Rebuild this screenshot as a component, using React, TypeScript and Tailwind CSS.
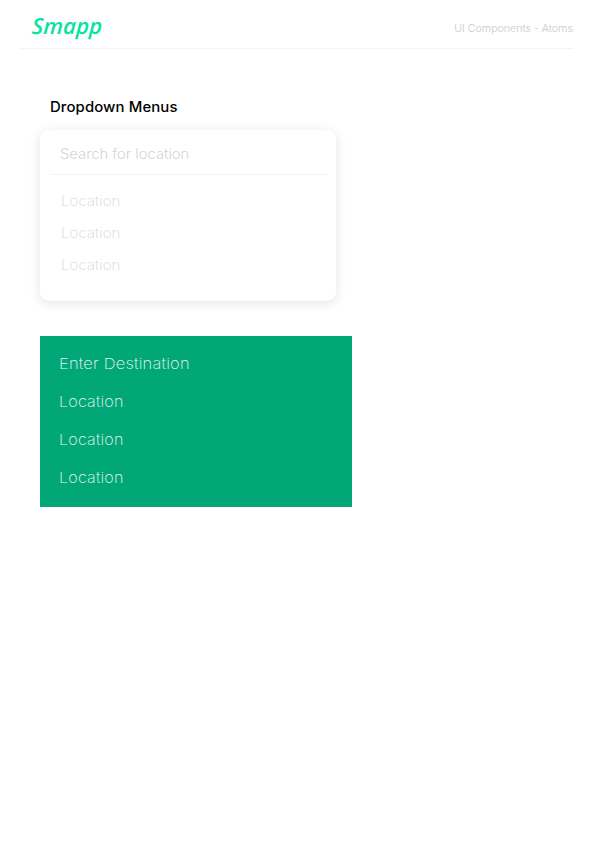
const locations = ['Location', 'Location', 'Location'];

export default function App() {
  return (
    <div className="min-h-[842px] w-[595px] overflow-hidden bg-white font-['Inter','Liberation_Sans',sans-serif]">
      <header className="ml-5 flex h-[49px] w-[553px] items-start justify-between border-b border-[#f3f3f3] pl-3">
        <span className="mt-[9px] origin-left scale-x-[1.01] -skew-x-3 font-['Open_Sans','Lato',sans-serif] text-[22px] leading-8 font-semibold whitespace-nowrap text-[#08e4a0] italic">
          Smapp
        </span>
        <span className="mt-[20px] origin-right scale-x-[1.07] text-[10px] leading-4 font-light tracking-[-0.04px] whitespace-nowrap text-[#c8c8c8]">
          UI Components - Atoms
        </span>
      </header>

      <main className="pl-10">
        <h1 className="mt-[48px] ml-[10px] w-fit origin-left scale-x-[1.065] text-[14px] leading-5 font-medium tracking-[0.1px] text-black">
          Dropdown Menus
        </h1>

        <section className="mt-[13px] h-[171px] w-[296px] rounded-[9px] bg-white pl-[10px] shadow-[0_2px_12px_rgba(0,0,0,0.11)]">
          <div className="h-[45px] w-[278px] border-b border-[#f3f3f3] pt-[14px] pl-[10px] text-[14px] leading-5 font-light text-[#d5d5d5]">
            <span className="inline-block origin-left scale-x-[1.055]">Search for location</span>
          </div>
          <ul className="flex flex-col gap-3 pt-4 pl-[11px] text-[14px] leading-5 font-extralight tracking-[0.1px] text-[#d5d5d5]">
            {locations.map((name, i) => (
              <li key={i} className="w-fit origin-left scale-x-[1.07]">{name}</li>
            ))}
          </ul>
        </section>

        <section className="mt-[35px] h-[171px] w-[312px] bg-[#02a777] pt-4 pl-[19px] text-[15px] leading-6 font-[250] tracking-[0.2px] text-[#e8f8f3]">
          <div className="w-fit origin-left scale-x-[1.098]">Enter Destination</div>
          <ul className="flex flex-col gap-[14px] pt-[14px]">
            {locations.map((name, i) => (
              <li key={i} className="w-fit origin-left scale-x-[1.072]">{name}</li>
            ))}
          </ul>
        </section>
      </main>
    </div>
  );
}
